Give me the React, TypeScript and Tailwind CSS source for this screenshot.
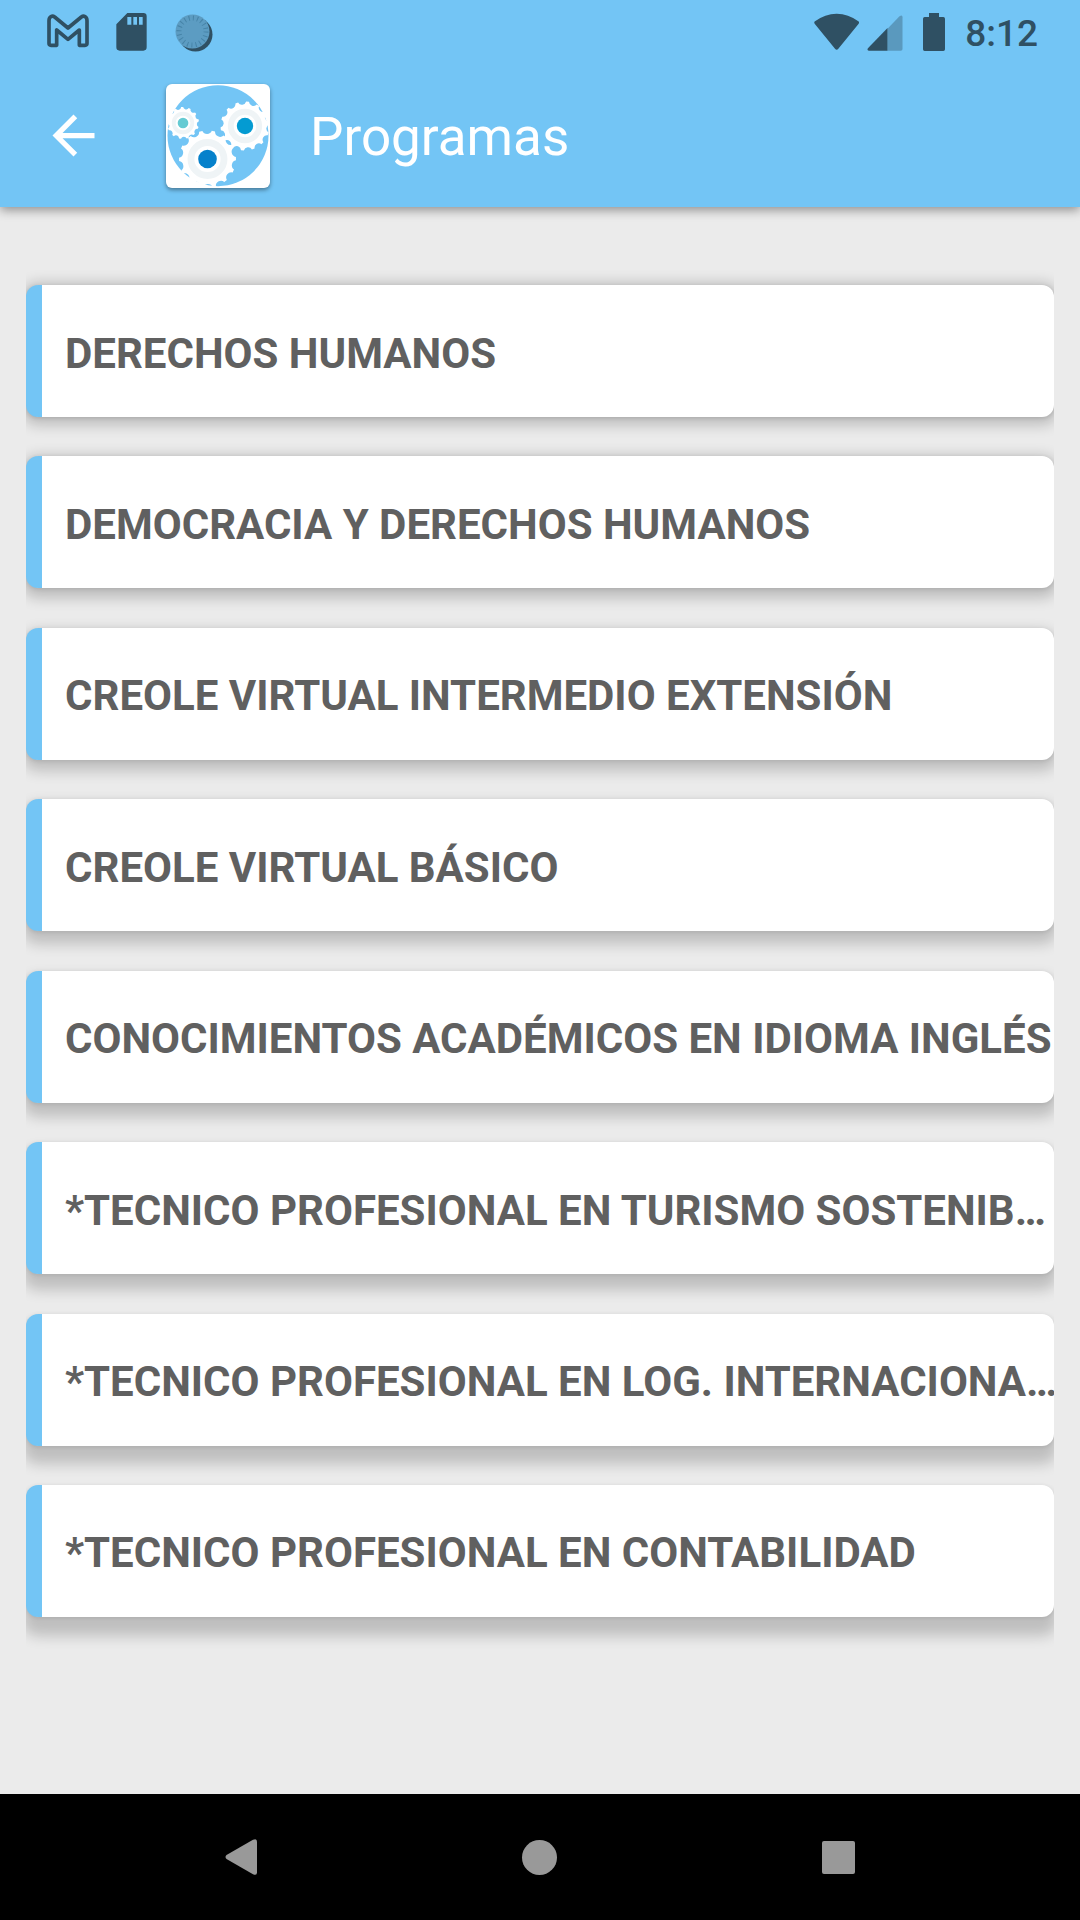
import React from 'react';

interface Program {
  name: string;
  shadow: string;
}

interface GearProps {
  cx: number;
  cy: number;
  radius: number;
  teeth: number;
  start: number;
  hub: number;
  color: string;
}

const programs: Program[] = [
  { name: 'DERECHOS HUMANOS', shadow: 'shadow-[0_3px_14px_5px_rgba(0,0,0,0.2),0_1px_4px_rgba(0,0,0,0.12)]' },
  { name: 'DEMOCRACIA Y DERECHOS HUMANOS', shadow: 'shadow-[0_5px_14px_5px_rgba(0,0,0,0.2),0_1px_4px_rgba(0,0,0,0.1)]' },
  { name: 'CREOLE VIRTUAL INTERMEDIO EXTENSIÓN', shadow: 'shadow-[0_7px_14px_4px_rgba(0,0,0,0.19),0_1px_4px_rgba(0,0,0,0.1)]' },
  { name: 'CREOLE VIRTUAL BÁSICO', shadow: 'shadow-[0_9px_14px_4px_rgba(0,0,0,0.19),0_1px_4px_rgba(0,0,0,0.1)]' },
  { name: 'CONOCIMIENTOS ACADÉMICOS EN IDIOMA INGLÉS', shadow: 'shadow-[0_10px_14px_4px_rgba(0,0,0,0.19),0_1px_4px_rgba(0,0,0,0.1)]' },
  { name: '*TECNICO PROFESIONAL EN TURISMO SOSTENIB…', shadow: 'shadow-[0_12px_14px_4px_rgba(0,0,0,0.19),0_1px_4px_rgba(0,0,0,0.1)]' },
  { name: '*TECNICO PROFESIONAL EN LOG. INTERNACIONA…', shadow: 'shadow-[0_14px_14px_4px_rgba(0,0,0,0.19),0_1px_4px_rgba(0,0,0,0.1)]' },
  { name: '*TECNICO PROFESIONAL EN CONTABILIDAD', shadow: 'shadow-[0_15px_14px_4px_rgba(0,0,0,0.19),0_1px_4px_rgba(0,0,0,0.1)]' },
];

const gearPath = (cx: number, cy: number, radius: number, teeth: number, start: number) => {
  const step = (Math.PI * 2) / teeth;
  const half = step * 0.13;
  const valley = radius * step * 0.4;
  const point = (angle: number) =>
    `${(cx + radius * Math.cos(angle)).toFixed(2)} ${(cy - radius * Math.sin(angle)).toFixed(2)}`;
  let d = '';
  for (let i = 0; i < teeth; i++) {
    const angle = (start * Math.PI) / 180 + i * step;
    d += i === 0 ? `M${point(angle - half)}` : `A${valley} ${valley} 0 0 1 ${point(angle - half)}`;
    d += `L${point(angle + half)}`;
  }
  return `${d}A${valley} ${valley} 0 0 1 ${point((start * Math.PI) / 180 - half)}Z`;
};

const Gear: React.FC<GearProps> = ({ cx, cy, radius, teeth, start, hub, color }) => (
  <g>
    <path d={gearPath(cx, cy, radius, teeth, start)} fill="#fff" />
    <circle cx={cx} cy={cy} r={radius * 0.58} fill="none" stroke="#eff4f6" strokeWidth={radius * 0.24} />
    <circle cx={cx} cy={cy} r={hub} fill={color} />
  </g>
);

const Logo: React.FC = () => (
  <svg viewBox="0 0 104 104" className="size-[104px] rounded-md bg-white shadow-[0_2px_4px_rgba(0,0,0,0.4)]" aria-hidden="true">
    <circle cx="52" cy="51.7" r="50.5" fill="#73c5f5" />
    <Gear cx={17} cy={39} radius={16} teeth={13} start={10} hub={5.3} color="#66cbd3" />
    <Gear cx={79} cy={42} radius={24.5} teeth={14} start={84} hub={8.2} color="#049bd2" />
    <Gear cx={41.5} cy={75} radius={28.5} teeth={14} start={78} hub={9.3} color="#0681cb" />
  </svg>
);

const StatusBar: React.FC = () => (
  <div className="flex h-16 items-center justify-between pl-[47px] pr-[42px] text-[#2f5063]">
    <div className="flex items-center gap-[27px]">
      <svg viewBox="142 37 126 114" className="h-[38px] w-[42px]" fill="none" stroke="currentColor" strokeWidth="11" strokeLinejoin="round" aria-hidden="true">
        <path d="M154 134q-6 0-6-6V60c0-13 10-16 17-11l40 33 40-33c7-5 17-2 17 11v68q0 6-6 6h-17V88l-34 28-34-28v46Z" />
      </svg>
      <svg viewBox="348 37 93 114" className="h-[38px] w-[31px]" fill="currentColor" fillRule="evenodd" aria-hidden="true">
        <path d="M382 37h48q10 0 10 10v93q0 10-10 10h-71q-10 0-10-10V71ZM382 49v23h12V49ZM400 49v23h11V49ZM417 49v23h11V49Z" />
      </svg>
      <svg viewBox="0 0 40 40" className="size-10" aria-hidden="true">
        <circle cx="21.5" cy="22.5" r="17" fill="#2f5063" />
        <circle cx="18.5" cy="19.5" r="17" fill="#5c9cc2" />
        <circle cx="18.5" cy="19.5" r="13.5" fill="none" stroke="#4684a8" strokeWidth="5" strokeDasharray="1 3.241" />
      </svg>
    </div>
    <div className="flex items-center gap-5">
      <div className="flex items-center gap-[7px]">
        <svg viewBox="97 37 138 114" className="h-[38px] w-[46px]" fill="currentColor" aria-hidden="true">
          <path d="M100 62Q130 39 165 39T230 62q4 3 1 7L170 144q-5 6-10 0L99 69q-3-4 1-7Z" />
        </svg>
        <svg viewBox="254 37 107 114" className="h-[38px] w-9" fill="currentColor" aria-hidden="true">
          <path d="M315 84 351 47q9-6 9 3v95q0 5-5 5h-40Z" fill="#5a99be" />
          <path d="M315 82v68h-56q-7-2-2-8Z" />
        </svg>
      </div>
      <svg viewBox="429 36 66 114" className="h-[38px] w-[22px]" fill="currentColor" aria-hidden="true">
        <path d="M447 36h30v12h13q5 0 5 5v92q0 5-5 5h-56q-5 0-5-5V53q0-5 5-5h13Z" />
      </svg>
      <time className="pt-0.5 text-[37px] leading-none font-medium">8:12</time>
    </div>
  </div>
);

const App: React.FC = () => {
  return (
    <div className="flex min-h-screen flex-col bg-[#ebebeb] font-[Roboto,sans-serif]">
      {/* Header */}
      <header className="relative z-10 bg-[#73c5f5] shadow-[0_3px_10px_rgba(0,0,0,0.4)]">
        <StatusBar />
        <div className="flex h-[143px] items-center pl-[42px]">
          <button type="button" aria-label="Volver" className="mr-[61px] text-white">
            <svg viewBox="0 0 24 24" className="size-[63px]" fill="currentColor" aria-hidden="true">
              <path d="M20 11H7.83l5.59-5.59L12 4l-8 8 8 8 1.41-1.41L7.83 13H20v-2z" />
            </svg>
          </button>
          <Logo />
          <h1 className="ml-10 pt-1 text-[53px] leading-none text-white">Programas</h1>
        </div>
      </header>

      {/* Program list */}
      <main className="flex flex-1 flex-col px-[26px]">
        <ul className="flex flex-1 flex-col justify-between gap-[39px] overflow-x-clip pt-[78px] pb-[177px]">
          {programs.map((program) => (
            <li key={program.name}>
              <a
                href="#"
                className={`flex h-[132px] items-center overflow-hidden rounded-xl border-l-16 border-[#73c5f5] bg-white pt-1 pl-[23px] text-[42px] font-bold whitespace-nowrap text-[#606060] ${program.shadow}`}
              >
                {program.name}
              </a>
            </li>
          ))}
        </ul>
      </main>

      {/* System navigation */}
      <nav className="grid h-[126px] grid-cols-3 bg-black px-[92px] text-[#999]">
        <button type="button" aria-label="Atrás" className="flex items-center justify-center">
          <svg viewBox="0 0 32 36" className="h-9 w-8" fill="currentColor" aria-hidden="true">
            <path d="M28 .8q4-2 4 2v30.400q0 4-4 2L1.500 20q-2-2 0-4Z" />
          </svg>
        </button>
        <button type="button" aria-label="Inicio" className="flex items-center justify-center">
          <span className="size-[35px] rounded-full bg-[#999]"></span>
        </button>
        <button type="button" aria-label="Recientes" className="flex items-center justify-center">
          <span className="size-[33px] rounded-xs bg-[#999]"></span>
        </button>
      </nav>
    </div>
  );
};

export default App;
